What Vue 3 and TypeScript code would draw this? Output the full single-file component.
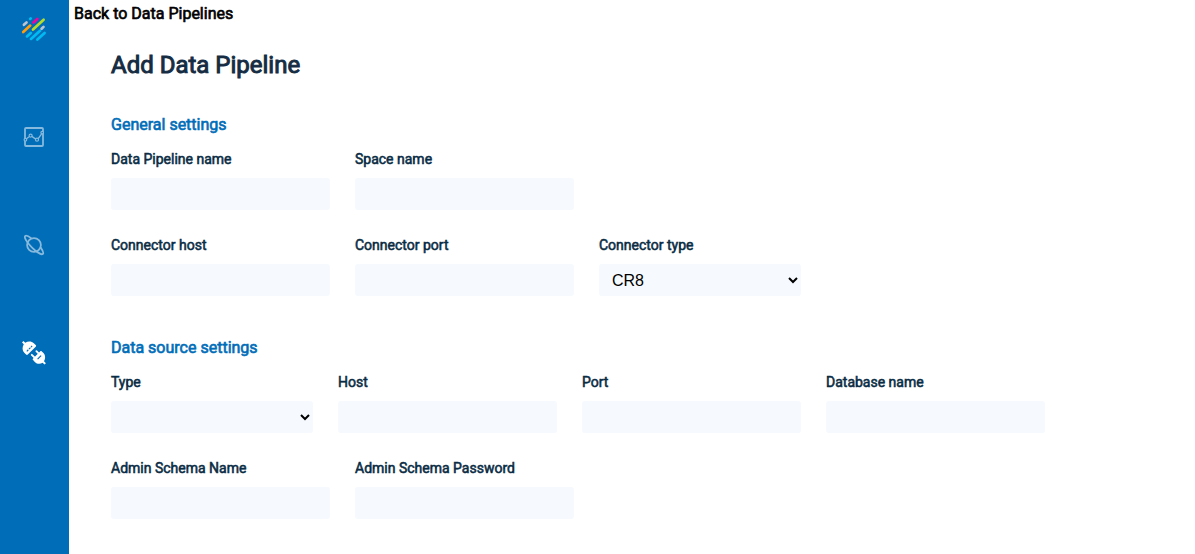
<script setup lang="ts">
import { reactive } from 'vue'

interface Field {
  id: string
  label: string
  options?: string[]
}

interface Section {
  title: string
  rows: Field[][]
}

const sections: Section[] = [
  {
    title: 'General settings',
    rows: [
      [
        { id: 'pipeline-name', label: 'Data Pipeline name' },
        { id: 'space-name', label: 'Space name' },
      ],
      [
        { id: 'connector-host', label: 'Connector host' },
        { id: 'connector-port', label: 'Connector port' },
        { id: 'connector-type', label: 'Connector type', options: ['CR8'] },
      ],
    ],
  },
  {
    title: 'Data source settings',
    rows: [
      [
        { id: 'source-type', label: 'Type', options: [''] },
        { id: 'source-host', label: 'Host' },
        { id: 'source-port', label: 'Port' },
        { id: 'database-name', label: 'Database name' },
      ],
      [
        { id: 'schema-name', label: 'Admin Schema Name' },
        { id: 'schema-password', label: 'Admin Schema Password' },
      ],
    ],
  },
]

const values = reactive<Record<string, string>>({ 'connector-type': 'CR8', 'source-type': '' })
</script>

<template>
  <div class="layout">
    <nav class="sidebar" aria-label="Main">
      <a class="nav-item" href="#" aria-label="Home">
        <svg width="26" height="26" viewBox="0 0 26 26" fill="none" stroke-width="2.7" stroke-linecap="round">
          <path d="M9.2 2.9l.5-.4M6 20.4l3.8-3.4M10 22.9l9-8.1M16.4 23.6l7.2-6.6" stroke="#00bbf2" />
          <path d="M2.9 8.8L5.5 6.4M20.6 12.8l1.9-1.9" stroke="#b9c4d0" />
          <path d="M12.5 6.6l3.9-3.7" stroke="#f0049c" />
          <path d="M12 13.5L22.6 3.7" stroke="#b5dc26" />
          <path d="M2.2 16l7-6.4" stroke="#ff9d0a" />
        </svg>
      </a>
      <a class="nav-item" href="#" aria-label="Dashboards">
        <svg class="dim" width="26" height="26" viewBox="0 0 26 26" fill="none" stroke="#fff" stroke-width="1.8">
          <rect x="4" y="4" width="18" height="18" rx="1" />
          <path d="M5.4 14.8l3.1-2.4M10.8 12.4l4 2.7M17.2 14.6l3.4-4.8" stroke-width="1.3" />
          <circle cx="4.4" cy="15.7" r="1.3" fill="#006db8" stroke-width="1.2" />
          <circle cx="9.6" cy="11.6" r="1.5" stroke-width="1.2" />
          <circle cx="16" cy="15.7" r="1.5" stroke-width="1.2" />
          <circle cx="21.2" cy="8.6" r="1.3" fill="#006db8" stroke-width="1.2" />
        </svg>
      </a>
      <a class="nav-item" href="#" aria-label="Spaces">
        <svg class="dim" width="26" height="26" viewBox="0 0 26 26" fill="none" stroke="#fff" stroke-width="1.8">
          <circle cx="13" cy="13" r="6.9" />
          <path d="M10.2 6.2C7.2 4 4.9 3.3 4.1 4.1c-1.2 1.3 1.7 6.3 6.7 11.2 4.8 4.8 9.8 7.8 11.1 6.6 .9-.9-.1-3.4-2.2-6.3" />
        </svg>
      </a>
      <a class="nav-item" href="#" aria-label="Data Pipelines" aria-current="page">
        <svg width="26" height="26" viewBox="0 0 26 26" fill="#fff">
          <path d="M1 2.5L2.4 1.1l1.9 1.7C7 1 10.6 1.2 12.8 3.3l1.9 1.8c.6.6.6 1.1 0 1.7l-7.9 7.8c-.6.6-1.1.6-1.7 0L3.3 12.8C1.2 10.6 1 7.1 2.8 4.3z" />
          <path d="M5.8 11.3l5.3-5.3" stroke="#006db8" stroke-width="1.1" stroke-dasharray="2.2 0.8" />
          <path d="M12.1 20.1c-.6-.6-.6-1.1 0-1.7l7-7c.6-.6 1.1-.6 1.7 0l1.7 1.7c2 2.1 2.2 5.5.5 8.2l1.9 1.9-1.4 1.4-1.9-1.8c-2.6 1.7-5.8 1.3-7.8-.9z" />
          <path d="M10.8 14.8l3.6 3.6M15.4 11.2l3.4 3.4" fill="none" stroke="#fff" stroke-width="1.9" stroke-linecap="round" />
          <path d="M16.6 19.2l3.5-3.5" stroke="#006db8" stroke-width="1.1" />
        </svg>
      </a>
    </nav>

    <main class="main">
      <a class="back" href="#">Back to Data Pipelines</a>
      <form class="form" @submit.prevent>
        <h1>Add Data Pipeline</h1>
        <section v-for="section in sections" :key="section.title" class="section">
          <h2>{{ section.title }}</h2>
          <div class="rows">
            <div v-for="(row, index) in section.rows" :key="index" class="row">
              <div v-for="field in row" :key="field.id" class="field">
                <label :for="field.id">{{ field.label }}</label>
                <select v-if="field.options" :id="field.id" v-model="values[field.id]">
                  <option v-for="option in field.options" :key="option" :value="option">{{ option }}</option>
                </select>
                <input
                  v-else
                  :id="field.id"
                  v-model="values[field.id]"
                  :type="field.id === 'schema-password' ? 'password' : 'text'"
                />
              </div>
            </div>
          </div>
        </section>
      </form>
    </main>
  </div>
</template>

<style>
body {
  margin: 0;
  background: #fff;
}
</style>

<style scoped>
.layout {
  display: flex;
  min-height: 100vh;
  font-family: Roboto, 'Liberation Sans', sans-serif;
  font-weight: 400;
  color: #0a2c44;
}
.sidebar {
  display: flex;
  flex: 0 0 69px;
  flex-direction: column;
  align-items: center;
  gap: 82px;
  box-sizing: border-box;
  padding: 16px 1px 0 0;
  background: #006db8;
}
.nav-item {
  display: block;
  width: 26px;
  height: 26px;
}
.nav-item svg {
  display: block;
}
.dim {
  opacity: 0.52;
}
.main {
  flex: 1;
  min-width: 0;
  padding-top: 4px;
}
.back,
h1,
h2,
label {
  font-weight: 400;
  -webkit-text-stroke: 0.04em currentColor;
}
.back {
  display: inline-block;
  margin-left: 5px;
  font-size: 16px;
  line-height: 20px;
  color: #000;
  text-decoration: none;
}
.form {
  padding: 27px 42px 35px;
}
h1 {
  margin: 0 0 36px;
  font-size: 24px;
  line-height: 28px;
  color: #152c42;
}
.section + .section {
  margin-top: 42px;
}
h2 {
  margin: 0 0 14px;
  font-size: 16px;
  line-height: 20px;
  color: #006db8;
}
.rows {
  display: flex;
  flex-direction: column;
  gap: 25px;
}
.row {
  display: flex;
  flex-wrap: wrap;
  gap: 25px;
}
.field {
  display: flex;
  flex-direction: column;
  gap: 9px;
}
label {
  font-size: 14px;
  line-height: 20px;
}
input,
select {
  box-sizing: border-box;
  height: 32px;
  border: 0;
  border-radius: 3px;
  background: #f6faff;
  font-family: 'Liberation Sans', Arial, sans-serif;
  font-size: 16px;
  color: #000;
}
input {
  width: 219px;
  padding: 0 13px;
}
select {
  width: 202px;
  padding: 0 1px 0 9px;
}
</style>
